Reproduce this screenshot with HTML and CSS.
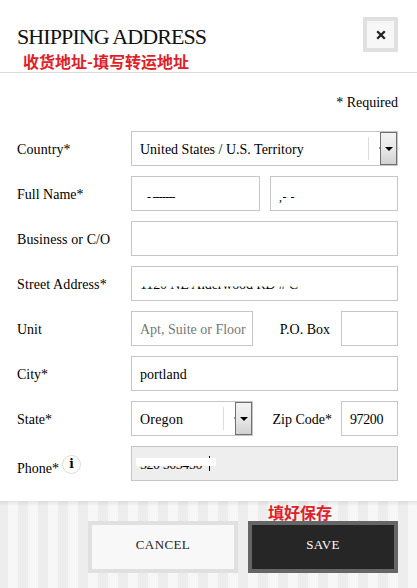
FILE: index.html
```html
<!DOCTYPE html>
<html lang="en">
<head>
<meta charset="utf-8">
<title>Shipping Address</title>
<link rel="stylesheet" href="styles.css">
</head>
<body>
<header class="header">
  <div>
    <h1 class="title">SHIPPING ADDRESS</h1>
    <p class="note" lang="zh">收货地址-填写转运地址</p>
  </div>
  <button class="close" aria-label="Close"><svg width="10" height="10" viewBox="0 0 10 10"><path d="M1.2 1.2 8.8 8.8M8.8 1.2 1.2 8.8" stroke="#222" stroke-width="2.3"/></svg></button>
</header>
<main class="form">
  <p class="required">* Required</p>
  <div class="row">
    <span class="label wide">Country*</span>
    <div class="field select"><span>United States / U.S. Territory</span><i class="divider"></i><b class="arrow"><svg width="8" height="4" viewBox="0 0 8 4"><path d="M0 0h8L4 4z"/></svg></b></div>
  </div>
  <div class="row">
    <span class="label">Full Name*</span>
    <div class="field first"><span class="dashes">- -------</span></div>
    <div class="field last"><span class="dashes short">,- -</span></div>
  </div>
  <div class="row">
    <span class="label wide">Business or C/O</span>
    <div class="field"></div>
  </div>
  <div class="row">
    <span class="label wide">Street Address*</span>
    <div class="field"><span class="clipped">1120 NE Alderwood RD # C</span></div>
  </div>
  <div class="row">
    <span class="label">Unit</span>
    <div class="field half placeholder"><span>Apt, Suite or Floor</span></div>
    <span class="side po">P.O. Box</span>
    <div class="field small"></div>
  </div>
  <div class="row">
    <span class="label">City*</span>
    <div class="field"><span>portland</span></div>
  </div>
  <div class="row">
    <span class="label">State*</span>
    <div class="field half select"><span class="oregon">Oregon</span><i class="divider"></i><b class="arrow"><svg width="8" height="4" viewBox="0 0 8 4"><path d="M0 0h8L4 4z"/></svg></b></div>
    <span class="side">Zip Code*</span>
    <div class="field small"><span class="zip">97200</span></div>
  </div>
  <div class="row">
    <span class="label phone"><span>Phone*</span><span class="info">i</span></span>
    <div class="field active"><span class="number">520 505450</span><i class="caret"></i><i class="mask"></i></div>
  </div>
</main>
<footer class="footer">
  <button class="button cancel">CANCEL</button>
  <button class="button save">SAVE</button>
  <span class="save-note" lang="zh">填好保存</span>
</footer>
</body>
</html>
```
FILE: styles.css
```css
* { box-sizing: border-box; }
body {
  margin: 0;
  width: 417px;
  height: 588px;
  overflow: hidden;
  background: #fff;
  color: #000;
  font: 14px/18px "Liberation Serif", serif;
  display: flex;
  flex-direction: column;
}
p, h1 { margin: 0; }
svg { display: block; }
button { font-family: inherit; padding: 0; border-radius: 0; }
.header {
  height: 73px;
  flex: none;
  border-bottom: 1px solid #ddd;
  padding: 17px 19px 0 17px;
  display: flex;
  justify-content: space-between;
}
.title {
  font-size: 22px;
  font-weight: 400;
  line-height: 24px;
  letter-spacing: -0.9px;
  margin-top: 8px;
  white-space: nowrap;
  color: #111;
}
.note, .save-note {
  font-family: "Noto Sans CJK SC", sans-serif;
  font-size: 16px;
  font-weight: 700;
  line-height: 20px;
  color: #e02027;
  white-space: nowrap;
}
.note { margin: 2px 0 0 6px; }
.close {
  width: 35px;
  height: 35px;
  border: 4px solid #e0e0e0;
  background: #f7f7f7;
  display: flex;
  align-items: center;
  justify-content: center;
}
.form {
  flex: none;
  height: 428px;
  padding: 21px 19px 0 17px;
  display: flex;
  flex-direction: column;
  gap: 10px;
}
.required { text-align: right; height: 27px; }
.row { display: flex; height: 35px; align-items: center; white-space: nowrap; }
.label { width: 114px; flex: none; padding-top: 3px; }
.wide { letter-spacing: .1px; }
.field {
  position: relative;
  flex: 1;
  height: 35px;
  border: 1px solid #c6c6c6;
  padding: 3px 0 0 8px;
  display: flex;
  align-items: center;
}
.first { flex: 0 0 129px; margin-right: 10px; }
.half { flex: 0 0 122px; }
.small { flex: 0 0 57px; }
.side { width: 88px; padding: 3px 9px 0 0; text-align: right; flex: none; }
.po { padding-right: 11px; }
.placeholder { color: #777; }
.select { padding-right: 0; }
.select::after {
  content: "";
  position: absolute;
  right: 17px;
  top: 15px;
  width: 1px;
  height: 2px;
  background: #999;
}
.oregon { letter-spacing: .2px; }
.zip { letter-spacing: -.4px; }
.divider { width: 1px; height: 23px; background: #ddd; margin: -3px 11px 0 auto; }
.arrow {
  width: 17px;
  height: 33px;
  margin-top: -3px;
  border: 1px solid #707070;
  background: linear-gradient(#f3f3f3, #e8e8e8 50%, #d2d2d2);
  display: flex;
  align-items: center;
  justify-content: center;
}
.dashes { font-size: 12px; margin: 4px 0 0 7px; letter-spacing: -0.8px; }
.short { margin-left: 0; letter-spacing: .5px; }
.clipped { clip-path: inset(10.5px 0 0 0); letter-spacing: -.15px; }
.active { background: #eee; }
.number { letter-spacing: -.45px; }
.caret { width: 1px; height: 15px; background: #000; margin: -4px 0 0 7px; }
.mask { position: absolute; left: 4px; top: 11px; width: 80px; height: 8px; background: #fff; }
.phone { display: flex; align-items: center; padding-top: 11px; }
.info {
  width: 19px;
  height: 19px;
  margin: -9px 0 0 3px;
  border: 1px solid #ddd;
  border-radius: 50%;
  font: bold 12px/17px "DejaVu Serif", serif;
  text-align: center;
}
.footer {
  position: relative;
  flex: 1;
  padding: 20px 19px 0 88px;
  display: flex;
  gap: 10px;
  background:
    linear-gradient(rgba(0,0,0,.08), transparent 5px),
    repeating-linear-gradient(90deg, #ededed 0 10px, #f7f7f7 10px 20px) -2px 0 / 440px 100%;
}
.button {
  height: 52px;
  border: 4px solid #e0e0e0;
  background: #f8f8f8;
  color: #222;
  font-size: 13px;
  padding-bottom: 4px;
}
.cancel { width: 150px; letter-spacing: .4px; }
.save { width: 150px; border-color: #666; background: #262626; color: #fff; letter-spacing: .3px; }
.save-note { position: absolute; left: 268px; top: 1px; }
```
